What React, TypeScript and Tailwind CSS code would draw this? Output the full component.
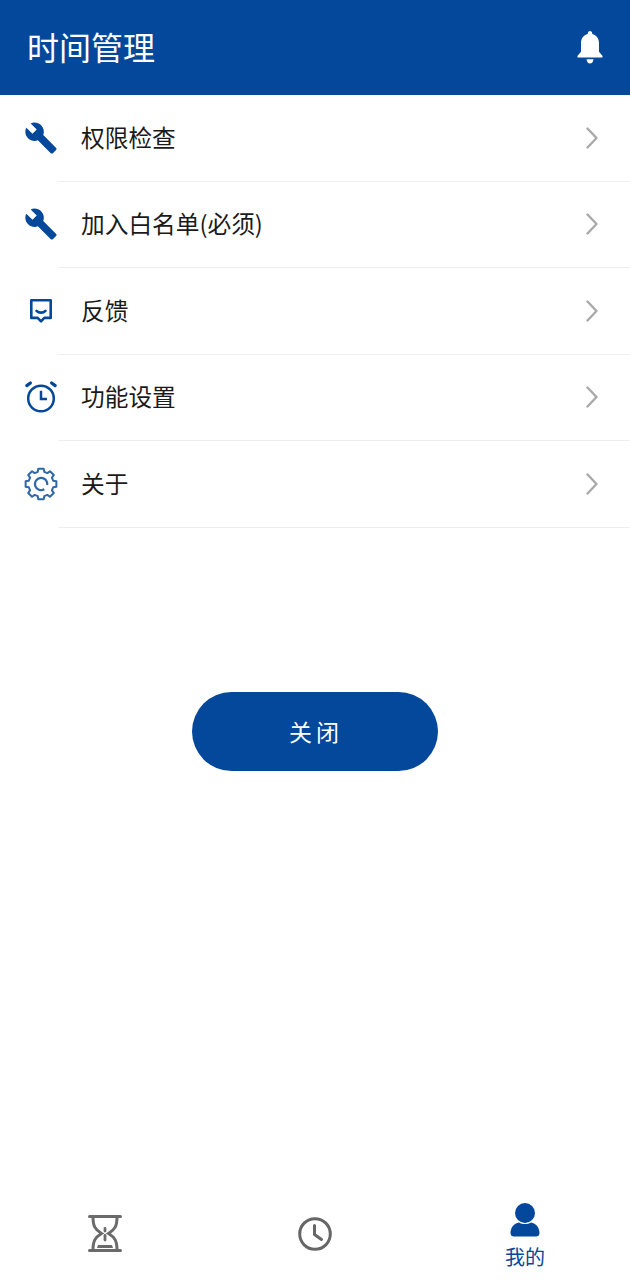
import React from 'react';

const cjk = { fontFamily: '"Noto Sans CJK SC", "Noto Sans", sans-serif' };

// 8 tooth gear outline
const gearPath = (() => {
  const pts: string[] = [];
  const polar = (r: number, deg: number) => {
    const a = ((deg - 90) * Math.PI) / 180;
    return `${(17 + r * Math.cos(a)).toFixed(2)} ${(17 + r * Math.sin(a)).toFixed(2)}`;
  };
  for (let i = 0; i < 8; i++) {
    const c = i * 45;
    pts.push(polar(12.6, c - 15), polar(15.6, c - 10), polar(15.6, c + 10), polar(12.6, c + 15));
  }
  return `M${pts.join('L')}Z`;
})();

const WrenchIcon = () => (
  <svg viewBox="0 0 24 24" className="w-[34px] h-[34px] text-[#04489c]" fill="currentColor">
    <path d="M22.7 19l-9.1-9.1c.9-2.3.4-5-1.5-6.9-2-2-5-2.4-7.4-1.3L9 6 6 9 1.6 4.7C.4 7.1.9 10.1 2.9 12.1c1.9 1.9 4.6 2.4 6.9 1.5l9.1 9.1c.4.4 1 .4 1.4 0l2.3-2.3c.5-.4.5-1.1.1-1.4z" />
  </svg>
);

const FeedbackIcon = () => (
  <svg viewBox="0 0 34 34" className="w-[34px] h-[34px] text-[#04489c]" fill="none" stroke="currentColor" strokeWidth="2.6">
    <path d="M7.300 6.300h19.400v17.600h-6.400L17 27.400l-3.300-3.500H7.300z" strokeLinejoin="round" />
    <path d="M12.500 16.800c2.400 2.400 6.600 2.400 9 0" strokeLinecap="round" />
  </svg>
);

const AlarmIcon = () => (
  <svg viewBox="0 0 34 34" className="w-[34px] h-[34px] text-[#04489c]" fill="none" stroke="currentColor">
    <circle cx="17" cy="18.500" r="12.800" strokeWidth="2.500" />
    <path d="M17 10.800v8.200h6" strokeWidth="2.500" />
    <path d="M2.800 5.600 6.400 3M31.200 5.600 27.600 3" strokeWidth="3.200" strokeLinecap="round" />
  </svg>
);

const GearIcon = () => (
  <svg viewBox="0 0 34 34" className="w-[34px] h-[34px] text-[#2f68a8]" fill="none" stroke="currentColor" strokeWidth="2" strokeLinejoin="round">
    <path d={gearPath} />
    <path d="M20.300 22.300a6.200 6.200 0 1 1 2.900-4.300" strokeWidth="2.200" />
  </svg>
);

const Chevron = () => (
  <svg viewBox="0 0 12 22" className="w-3 h-[22px] text-[#a9a9a9]" fill="none" stroke="currentColor" strokeWidth="2.400" strokeLinecap="round" strokeLinejoin="round">
    <path d="M1.500 1.500 10.500 11 1.500 20.500" />
  </svg>
);

const BellIcon = () => (
  <svg viewBox="0 0 26 33" className="w-[26px] h-[33px] text-white" fill="currentColor">
    <path d="M13 0c1.300 0 2.200 1 2.200 2.300v.7C19.600 4 22 7.800 22 12.200v8.600l3.200 3.600c.8.900.4 2.100-.8 2.100H1.600c-1.200 0-1.600-1.200-.8-2.100L4 20.800v-8.600C4 7.800 6.400 4 10.800 3v-.7C10.800 1 11.700 0 13 0z" />
    <path d="M9.500 28.200h7c-.3 2.700-1.700 4.300-3.500 4.300s-3.200-1.600-3.500-4.300z" />
  </svg>
);

const HourglassIcon = () => (
  <svg viewBox="0 0 34 37" className="w-[34px] h-[37px] text-[#6b6b6b]" fill="none" stroke="currentColor">
    <path d="M1.500 1.500h31M1.500 35.500h31" strokeWidth="3" strokeLinecap="round" />
    <path d="M5 2c0 9 2 12.500 8.500 16.500C7 22.500 5 26 5 35M29 2c0 9-2 12.500-8.500 16.500C27 22.500 29 26 29 35" strokeWidth="3" />
    <path d="M17 13.500v2.500M17 20.500v4.500" strokeWidth="2.800" strokeLinecap="round" />
    <path d="M9 33l1-3h14l1 3z" fill="currentColor" strokeWidth="0" />
  </svg>
);

const ClockIcon = () => (
  <svg viewBox="0 0 34 34" className="w-[34px] h-[34px] text-[#666666]" fill="none" stroke="currentColor" strokeWidth="3">
    <circle cx="17" cy="17" r="15.300" />
    <path d="M16.500 8.500v9l7 5" strokeLinecap="round" strokeLinejoin="round" />
  </svg>
);

const PersonIcon = () => (
  <svg viewBox="0 0 30 34" className="w-[30px] h-[34px] text-[#04489c]" fill="currentColor">
    <circle cx="15" cy="10" r="10" />
    <path d="M9 19.500c3.500 2 8.500 2 12 0 5 .8 8.500 5 8.500 10.500 0 2.500-1.500 3.500-3.500 3.500H4C2 33.500.5 32.500.5 30 .5 24.500 4 20.300 9 19.500z" />
  </svg>
);

const rows = [
  { label: '权限检查', icon: <WrenchIcon /> },
  { label: '加入白名单(必须)', icon: <WrenchIcon /> },
  { label: '反馈', icon: <FeedbackIcon /> },
  { label: '功能设置', icon: <AlarmIcon /> },
  { label: '关于', icon: <GearIcon /> },
];

export default function App() {
  return (
    <div className="w-[630px] h-[1280px] bg-white flex flex-col overflow-hidden" style={cjk}>
      {/* Header */}
      <div className="h-[95px] shrink-0 bg-[#04489c] flex items-center justify-between px-[27px]">
        <span className="text-[32px] leading-none text-white pb-[3px]">时间管理</span>
        <BellIcon />
      </div>

      {/* Menu */}
      <div className="flex flex-col">
        {rows.map((row) => (
          <div key={row.label} className="h-[86.500px] flex">
            <div className="w-[58px] shrink-0 flex items-center pl-[24px] pb-[1px]">{row.icon}</div>
            <div className="flex-1 flex items-center justify-between border-b border-[#eeeeee] pl-[23px] pr-[32px]">
              <span className="text-[23.700px] leading-none text-[#1a1a1a]">{row.label}</span>
              <Chevron />
            </div>
          </div>
        ))}
      </div>

      {/* Close button */}
      <div className="flex justify-center mt-[164.500px]">
        <button className="w-[246px] h-[79px] rounded-full bg-[#04489c] text-white text-[23px] tracking-[4px] pl-[2px]">
          关闭
        </button>
      </div>

      {/* Bottom nav */}
      <div className="mt-auto h-[88px] flex">
        <div className="w-[210px] flex items-center justify-center pb-[6px]">
          <HourglassIcon />
        </div>
        <div className="w-[210px] flex items-center justify-center pb-[5px]">
          <ClockIcon />
        </div>
        <div className="w-[210px] flex flex-col items-center pt-[11px]">
          <PersonIcon />
          <span className="mt-[10px] text-[20px] leading-none text-[#04489c]">我的</span>
        </div>
      </div>
    </div>
  );
}
